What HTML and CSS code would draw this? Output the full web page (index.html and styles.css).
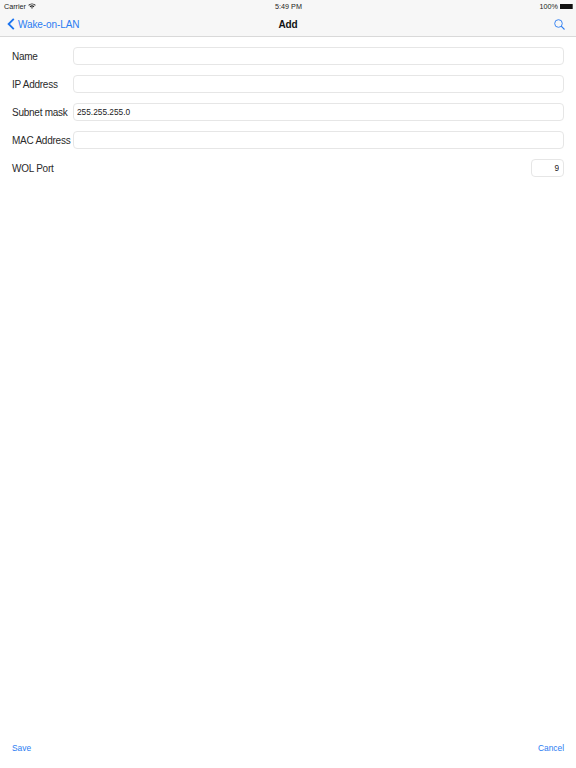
FILE: index.html
```html
<!DOCTYPE html>
<html lang="en">
<head>
  <meta charset="UTF-8" />
  <meta name="viewport" content="width=device-width, initial-scale=1" />
  <title>Add</title>
  <link rel="stylesheet" href="styles.css">
</head>
<body>
  <div class="app">
    <header class="topbar">
      <div class="status">
        <div class="status-left">
          <span>Carrier</span>
          <svg class="wifi" width="8" height="6" viewBox="0 0 8 6">
            <path d="M0.2 2 A5.4 5.4 0 0 1 7.8 2 L7 2.8 A4.3 4.3 0 0 0 1 2.8 Z" fill="#222"/>
            <path d="M1.6 3.4 A3.4 3.4 0 0 1 6.4 3.4 L5.6 4.2 A2.3 2.3 0 0 0 2.4 4.2 Z" fill="#222"/>
            <path d="M3 4.8 A1.4 1.4 0 0 1 5 4.8 L4 5.8 Z" fill="#222"/>
          </svg>
        </div>
        <div class="status-time">5:49 PM</div>
        <div class="status-right">
          <span>100%</span>
          <span class="battery"></span>
        </div>
      </div>
      <nav class="nav">
        <a class="back" href="#">
          <svg width="8" height="12" viewBox="0 0 8 12">
            <path d="M6.8 0.8 L1.6 6 L6.8 11.2" fill="none" stroke="#1a73f0" stroke-width="1.8"/>
          </svg>
          <span>Wake-on-LAN</span>
        </a>
        <h1 class="nav-title">Add</h1>
        <a class="search" href="#">
          <svg width="11" height="11" viewBox="0 0 11 11">
            <circle cx="4.5" cy="4.5" r="3.8" fill="none" stroke="#2a7cf2" stroke-width="0.9"/>
            <path d="M7.2 7.2 L10.5 10.5" fill="none" stroke="#2a7cf2" stroke-width="1.1"/>
          </svg>
        </a>
      </nav>
    </header>

    <main class="form">
      <div class="row">
        <label class="label">Name</label>
        <input class="field" type="text">
      </div>
      <div class="row">
        <label class="label">IP Address</label>
        <input class="field" type="text">
      </div>
      <div class="row">
        <label class="label">Subnet mask</label>
        <input class="field" type="text" value="255.255.255.0">
      </div>
      <div class="row">
        <label class="label">MAC Address</label>
        <input class="field" type="text">
      </div>
      <div class="row">
        <label class="label">WOL Port</label>
        <input class="field port" type="text" value="9">
      </div>
    </main>

    <footer class="toolbar">
      <a href="#">Save</a>
      <a href="#">Cancel</a>
    </footer>
  </div>
</body>
</html>
```

FILE: styles.css
```css
html, body {
  margin: 0;
  height: 100%;
}

body {
  font-family: 'Liberation Sans', Arial, sans-serif;
  background-color: #fff;
  color: #222;
}

a {
  color: #2a7cf2;
  text-decoration: none;
}

.app {
  display: flex;
  flex-direction: column;
  height: 768px;
}

/* === Top bar === */
.topbar {
  height: 36px;
  background-color: #f7f7f7;
  border-bottom: 1px solid #d9d9d9;
}

.status {
  height: 12px;
  display: grid;
  grid-template-columns: 1fr auto 1fr;
  align-items: center;
  padding: 0 3px 0 4px;
  font-size: 7.2px;
  color: #222;
}

.status-left {
  display: flex;
  align-items: center;
  gap: 2px;
}

.status-right {
  display: flex;
  align-items: center;
  justify-content: flex-end;
  gap: 2px;
}

.battery {
  width: 12px;
  height: 5px;
  background-color: #111;
  border-right: 1px solid #555;
}

.nav {
  height: 24px;
  display: grid;
  grid-template-columns: 1fr auto 1fr;
  align-items: center;
  padding: 0 11px 1px;
}

.back {
  display: flex;
  align-items: center;
  gap: 3px;
  margin-left: -4px;
  font-size: 10px;
  letter-spacing: -0.1px;
}

.nav-title {
  margin: 0;
  font-size: 10px;
  font-weight: 700;
  letter-spacing: -0.1px;
  color: #111;
}

.search {
  display: flex;
  justify-content: flex-end;
}

/* === Form === */
.form {
  flex: 1;
  display: flex;
  flex-direction: column;
  gap: 10px;
  padding: 10px 12px 0 12px;
}

.row {
  display: flex;
  align-items: center;
  height: 18px;
}

.label {
  width: 61px;
  flex: none;
  font-size: 10px;
  letter-spacing: -0.25px;
  white-space: nowrap;
  color: #2a2a2a;
}

.field {
  flex: 1;
  min-width: 0;
  height: 18px;
  box-sizing: border-box;
  margin: 0;
  padding: 0 3px;
  border: 1px solid #e6e6e6;
  border-radius: 4px;
  background-color: #fff;
  font-family: inherit;
  font-size: 8.3px;
  color: #222;
  outline: none;
}

.port {
  flex: none;
  width: 33px;
  margin-left: auto;
  padding-right: 4px;
  text-align: right;
}

/* === Bottom toolbar === */
.toolbar {
  height: 40px;
  display: flex;
  align-items: center;
  justify-content: space-between;
  padding: 0 12px;
  font-size: 8.4px;
}
```
